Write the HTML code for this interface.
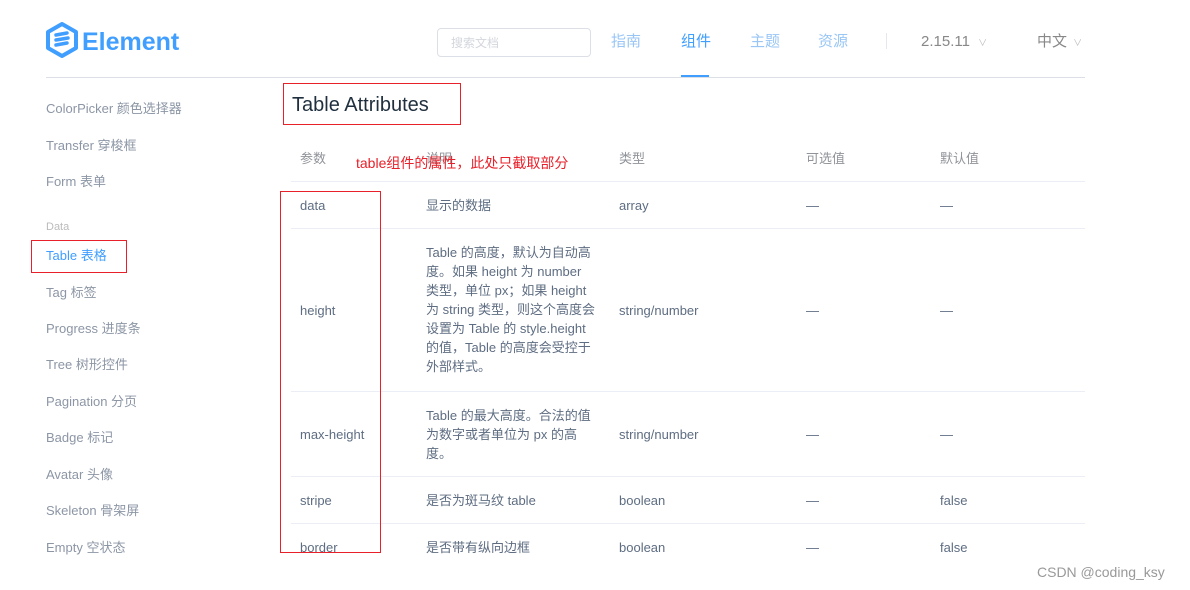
<!DOCTYPE html>
<html><head><meta charset="utf-8"><style>
*{margin:0;padding:0;box-sizing:border-box}
body{width:1190px;height:590px;overflow:hidden;background:#fff;font-family:"Liberation Sans","Noto Sans CJK SC",sans-serif;position:relative;color:#5e6d82}
.a{position:absolute;white-space:nowrap;line-height:16px}
.nav{font-size:15px;color:#99c6f5;top:34px}
.side{left:46px;font-size:13px;color:#8c96a5;margin-top:1px}
.c{font-size:13px;color:#5e6d82;margin-top:1px}
.hl{position:absolute;left:291px;width:794px;height:1px;background:#ebeef5}
.rb{position:absolute;border:1.5px solid #e8202a}
.desc{line-height:19px}
</style></head><body>
<svg class="a" style="left:45px;top:22px" width="34" height="36" viewBox="0 0 34 36"><path d="M17 2 L31 10 V26 L17 34 L3 26 V10 Z" fill="none" stroke="#409eff" stroke-width="4" stroke-linejoin="round"/><path d="M11 13 L22 11 M11 18 L23 16 M11 23 L22 21" stroke="#409eff" stroke-width="3.5" stroke-linecap="round"/></svg>
<div class="a" style="left:82px;top:28px;line-height:28px;font-size:25px;font-weight:bold;color:#409eff">Element</div>
<div class="a" style="left:437px;top:28px;width:154px;height:29px;border:1px solid #dcdfe6;border-radius:4px"></div>
<div class="a" style="left:451px;top:35px;font-size:12px;color:#d3d6dc">搜索文档</div>
<div class="a nav" style="left:611px">指南</div>
<div class="a nav" style="left:681px;color:#409eff">组件</div>
<div class="a" style="left:681px;top:75px;width:28px;height:2px;background:#409eff"></div>
<div class="a nav" style="left:750px">主题</div>
<div class="a nav" style="left:818px">资源</div>
<div class="a" style="left:886px;top:33px;width:1px;height:16px;background:#e4e7ed"></div>
<div class="a" style="left:921px;top:34px;font-size:15px;color:#888">2.15.11 <span style="font-size:9px;color:#bbb;margin-left:4px">∨</span></div>
<div class="a" style="left:1037px;top:34px;font-size:15px;color:#888">中文 <span style="font-size:9px;color:#bbb;margin-left:2px">∨</span></div>
<div class="a" style="left:46px;top:77px;width:1039px;height:1px;background:#dcdfe6"></div>

<div class="a side" style="top:100px">ColorPicker 颜色选择器</div>
<div class="a side" style="top:137px">Transfer 穿梭框</div>
<div class="a side" style="top:173px">Form 表单</div>
<div class="a side" style="top:218px;font-size:11px;color:#bbb">Data</div>
<div class="a side" style="top:247px;color:#409eff">Table 表格</div>
<div class="a side" style="top:284px">Tag 标签</div>
<div class="a side" style="top:320px">Progress 进度条</div>
<div class="a side" style="top:356px">Tree 树形控件</div>
<div class="a side" style="top:393px">Pagination 分页</div>
<div class="a side" style="top:429px">Badge 标记</div>
<div class="a side" style="top:466px">Avatar 头像</div>
<div class="a side" style="top:502px">Skeleton 骨架屏</div>
<div class="a side" style="top:539px">Empty 空状态</div>
<div class="rb" style="left:31px;top:240px;width:96px;height:33px"></div>

<div class="a" style="left:292px;top:94px;line-height:22px;font-size:20px;color:#1f2f3d">Table Attributes</div>
<div class="rb" style="left:283px;top:83px;width:178px;height:42px"></div>

<div class="a c" style="left:300px;top:150px;color:#909399">参数</div>
<div class="a c" style="left:426px;top:150px;color:#909399">说明</div>
<div class="a c" style="left:619px;top:150px;color:#909399">类型</div>
<div class="a c" style="left:806px;top:150px;color:#909399">可选值</div>
<div class="a c" style="left:940px;top:150px;color:#909399">默认值</div>
<div class="a" style="left:356px;top:155px;font-size:14px;color:#e8202a">table组件的属性，此处只截取部分</div>
<div class="hl" style="top:181px"></div>

<div class="a c" style="left:300px;top:197px">data</div>
<div class="a c" style="left:426px;top:197px">显示的数据</div>
<div class="a c" style="left:619px;top:197px">array</div>
<div class="a c" style="left:806px;top:197px">—</div>
<div class="a c" style="left:940px;top:197px">—</div>
<div class="hl" style="top:228px"></div>

<div class="a c" style="left:300px;top:302px">height</div>
<div class="a c desc" style="left:426px;top:242px">Table 的高度，默认为自动高<br>度。如果 height 为 number<br>类型，单位 px；如果 height<br>为 string 类型，则这个高度会<br>设置为 Table 的 style.height<br>的值，Table 的高度会受控于<br>外部样式。</div>
<div class="a c" style="left:619px;top:302px">string/number</div>
<div class="a c" style="left:806px;top:302px">—</div>
<div class="a c" style="left:940px;top:302px">—</div>
<div class="hl" style="top:391px"></div>

<div class="a c" style="left:300px;top:426px">max-height</div>
<div class="a c desc" style="left:426px;top:405px">Table 的最大高度。合法的值<br>为数字或者单位为 px 的高<br>度。</div>
<div class="a c" style="left:619px;top:426px">string/number</div>
<div class="a c" style="left:806px;top:426px">—</div>
<div class="a c" style="left:940px;top:426px">—</div>
<div class="hl" style="top:476px"></div>

<div class="a c" style="left:300px;top:492px">stripe</div>
<div class="a c" style="left:426px;top:492px">是否为斑马纹 table</div>
<div class="a c" style="left:619px;top:492px">boolean</div>
<div class="a c" style="left:806px;top:492px">—</div>
<div class="a c" style="left:940px;top:492px">false</div>
<div class="hl" style="top:523px"></div>

<div class="a c" style="left:300px;top:539px">border</div>
<div class="a c" style="left:426px;top:539px">是否带有纵向边框</div>
<div class="a c" style="left:619px;top:539px">boolean</div>
<div class="a c" style="left:806px;top:539px">—</div>
<div class="a c" style="left:940px;top:539px">false</div>

<div class="rb" style="left:280px;top:191px;width:101px;height:362px"></div>
<div class="a" style="left:1037px;top:564px;font-size:14px;color:#999">CSDN @coding_ksy</div>
</body></html>
